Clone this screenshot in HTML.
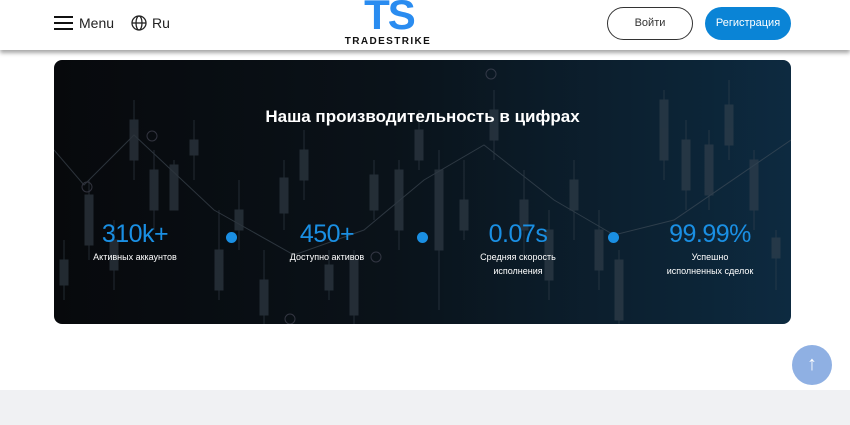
<!DOCTYPE html>
<html><head><meta charset="utf-8"><style>
*{margin:0;padding:0;box-sizing:border-box}
body{width:850px;height:425px;overflow:hidden;background:#fff;font-family:"Liberation Sans","Noto Sans CJK SC",sans-serif;position:relative}
.hdr{position:absolute;left:0;top:0;width:850px;height:50px;background:#fff;box-shadow:0 3px 4px rgba(0,0,0,.35);z-index:5;overflow:hidden}
.menu{position:absolute;left:54px;top:15px;font-size:14px;color:#222}
.ru{position:absolute;left:131px;top:15px;font-size:14px;color:#222}
.ts{position:absolute;left:344px;width:90px;top:-6px;text-align:center;font-size:42px;font-weight:bold;color:#2a8cf0;line-height:42px;letter-spacing:-2px}
.brand{position:absolute;left:340px;width:96px;top:36px;text-align:center;font-size:10px;font-weight:bold;letter-spacing:1.4px;color:#111;line-height:12px}
.btn1{position:absolute;left:607px;top:7px;width:86px;height:33px;border:1px solid #333;border-radius:17px;font-size:11px;color:#333;text-align:center;line-height:31px}
.btn2{position:absolute;left:705px;top:7px;width:86px;height:33px;background:#0a84d6;border-radius:17px;font-size:11px;color:#fff;text-align:center;line-height:33px}
.card{position:absolute;left:54px;top:60px;width:737px;height:264px;border-radius:8px;overflow:hidden;background:linear-gradient(90deg,#07090c 0%,#0a1219 45%,#0d2a40 100%)}
.title{position:absolute;left:0;width:737px;top:47px;text-align:center;color:#fff;font-size:17px;font-weight:bold}
.stat{position:absolute;top:160px;width:160px;text-align:center;color:#fff}
.num{font-size:25px;color:#1a8fe3;line-height:28px;letter-spacing:-.5px}
.lbl{font-size:9px;line-height:14px;margin-top:2px}
.dot{position:absolute;top:172px;width:11px;height:11px;border-radius:50%;background:#1a8fe3}
.up{position:absolute;left:792px;top:345px;width:40px;height:40px;border-radius:50%;background:#8fb0e3;color:#fff;text-align:center;font-size:20px;line-height:38px}
.foot{position:absolute;left:0;top:390px;width:850px;height:35px;background:#f0f1f3}
</style></head><body>
<div class="hdr">
 <div class="menu"><svg width="19" height="15" viewBox="0 0 19 15" style="vertical-align:-2px;margin-right:6px"><rect y="1" width="19" height="2" fill="#111"/><rect y="7" width="19" height="2" fill="#111"/><rect y="13" width="19" height="2" fill="#111"/></svg>Menu</div>
 <div class="ru"><svg width="16" height="16" viewBox="0 0 16 16" style="vertical-align:-3px;margin-right:5px" fill="none" stroke="#222" stroke-width="1.3"><circle cx="8" cy="8" r="7"/><ellipse cx="8" cy="8" rx="3" ry="7"/><line x1="1" y1="8" x2="15" y2="8"/></svg>Ru</div>
 <div class="ts">TS</div><div class="brand">TRADESTRIKE</div>
 <div class="btn1">Войти</div>
 <div class="btn2">Регистрация</div>
</div>
<div class="card">
 <svg width="737" height="264" style="position:absolute;left:0;top:0" fill="#3a4550" opacity=".55">
  <g stroke="#3a4550" stroke-width="1">
  <line x1="10" y1="180" x2="10" y2="240"/><rect x="6" y="200" width="8" height="25"/>
  <line x1="35" y1="120" x2="35" y2="200"/><rect x="31" y="135" width="8" height="50"/>
  <line x1="60" y1="160" x2="60" y2="230"/><rect x="56" y="180" width="8" height="30"/>
  <line x1="80" y1="40" x2="80" y2="120"/><rect x="76" y="60" width="8" height="40"/>
  <line x1="100" y1="90" x2="100" y2="170"/><rect x="96" y="110" width="8" height="40"/>
  <line x1="120" y1="100" x2="120" y2="150"/><rect x="116" y="105" width="8" height="45"/>
  <line x1="140" y1="60" x2="140" y2="120"/><rect x="136" y="80" width="8" height="15"/>
  <line x1="165" y1="150" x2="165" y2="240"/><rect x="161" y="190" width="8" height="40"/>
  <line x1="185" y1="120" x2="185" y2="190"/><rect x="181" y="150" width="8" height="20"/>
  <line x1="210" y1="190" x2="210" y2="264"/><rect x="206" y="220" width="8" height="35"/>
  <line x1="230" y1="100" x2="230" y2="170"/><rect x="226" y="118" width="8" height="35"/>
  <line x1="250" y1="70" x2="250" y2="140"/><rect x="246" y="90" width="8" height="30"/>
  <line x1="275" y1="190" x2="275" y2="240"/><rect x="271" y="205" width="8" height="25"/>
  <line x1="300" y1="190" x2="300" y2="264"/><rect x="296" y="200" width="8" height="55"/>
  <line x1="320" y1="100" x2="320" y2="160"/><rect x="316" y="115" width="8" height="35"/>
  <line x1="345" y1="100" x2="345" y2="190"/><rect x="341" y="110" width="8" height="60"/>
  <line x1="365" y1="50" x2="365" y2="110"/><rect x="361" y="70" width="8" height="30"/>
  <line x1="385" y1="90" x2="385" y2="250"/><rect x="381" y="110" width="8" height="80"/>
  <line x1="410" y1="100" x2="410" y2="180"/><rect x="406" y="140" width="8" height="30"/>
  <line x1="440" y1="30" x2="440" y2="100"/><rect x="436" y="50" width="8" height="30"/>
  <line x1="470" y1="110" x2="470" y2="200"/><rect x="466" y="140" width="8" height="30"/>
  <line x1="495" y1="150" x2="495" y2="240"/><rect x="491" y="170" width="8" height="50"/>
  <line x1="520" y1="100" x2="520" y2="180"/><rect x="516" y="120" width="8" height="30"/>
  <line x1="545" y1="150" x2="545" y2="230"/><rect x="541" y="170" width="8" height="40"/>
  <line x1="565" y1="190" x2="565" y2="264"/><rect x="561" y="200" width="8" height="60"/>
  <line x1="610" y1="30" x2="610" y2="120"/><rect x="606" y="40" width="8" height="60"/>
  <line x1="632" y1="60" x2="632" y2="150"/><rect x="628" y="80" width="8" height="50"/>
  <line x1="655" y1="70" x2="655" y2="150"/><rect x="651" y="85" width="8" height="50"/>
  <line x1="675" y1="20" x2="675" y2="100"/><rect x="671" y="45" width="8" height="40"/>
  <line x1="700" y1="90" x2="700" y2="170"/><rect x="696" y="100" width="8" height="50"/>
  <line x1="722" y1="170" x2="722" y2="230"/><rect x="718" y="178" width="8" height="20"/>
  </g>
  <polyline points="0,90 30,125 80,75 160,150 240,195 310,170 370,120 430,85 500,140 560,175 620,160 737,80" fill="none" stroke="#4a5560" stroke-width="1"/>
  <circle cx="33" cy="127" r="5" fill="none" stroke="#556"/><circle cx="98" cy="76" r="5" fill="none" stroke="#556"/><circle cx="236" cy="259" r="5" fill="none" stroke="#556"/><circle cx="322" cy="197" r="5" fill="none" stroke="#556"/><circle cx="437" cy="14" r="5" fill="none" stroke="#556"/>
 </svg>
 <div class="title">Наша производительность в цифрах</div>
 <div class="stat" style="left:1px"><div class="num">310k+</div><div class="lbl">Активных аккаунтов</div></div>
 <div class="dot" style="left:172px"></div>
 <div class="stat" style="left:193px"><div class="num">450+</div><div class="lbl">Доступно активов</div></div>
 <div class="dot" style="left:363px"></div>
 <div class="stat" style="left:384px"><div class="num">0.07s</div><div class="lbl">Средняя скорость<br>исполнения</div></div>
 <div class="dot" style="left:554px"></div>
 <div class="stat" style="left:576px"><div class="num">99.99%</div><div class="lbl">Успешно<br>исполненных сделок</div></div>
</div>
<div class="foot"></div>
<div class="up">↑</div>
</body></html>
